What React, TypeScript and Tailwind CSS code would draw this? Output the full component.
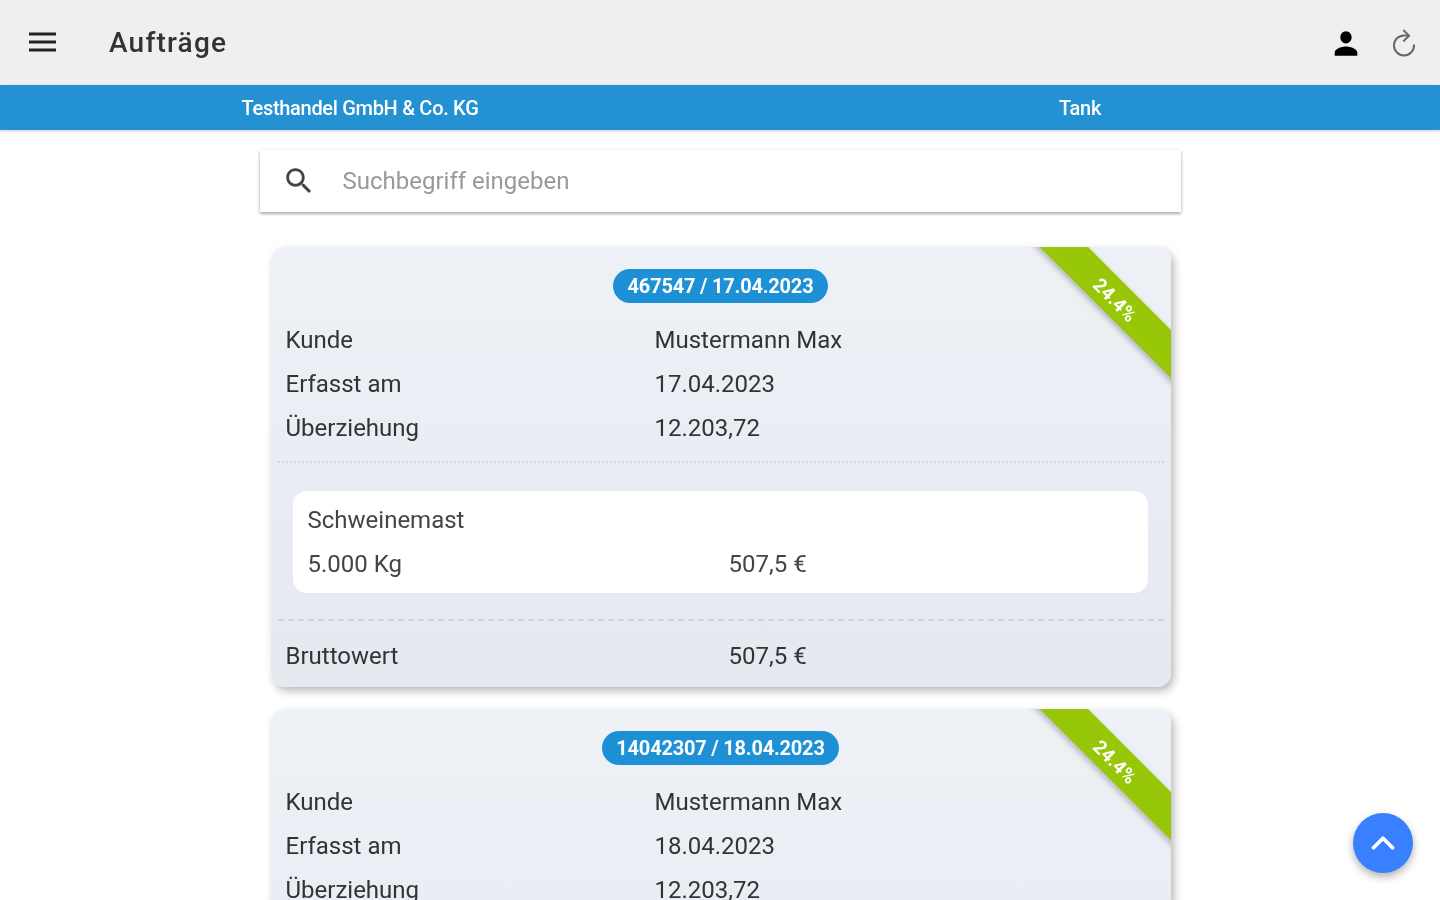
import { ChevronUp } from "lucide-react";

const orders = [
  { id: "467547 / 17.04.2023", date: "17.04.2023" },
  { id: "14042307 / 18.04.2023", date: "18.04.2023" },
];

function OrderCard({ id, date }: { id: string; date: string }) {
  return (
    <div className="relative overflow-hidden rounded-[14px] bg-gradient-to-b from-[#eef1f6] to-[#e5e8ef] shadow-[3px_4px_8px_rgba(0,0,0,0.28)] h-[440px] shrink-0">
      {/* corner ribbon */}
      <div className="absolute left-[726px] top-[36px] w-[240px] h-[34px] rotate-45 bg-[#97c706] shadow-[0_3px_6px_rgba(0,0,0,0.25)] flex items-center justify-center pr-[3px] pt-[5px] text-white text-[19px] font-bold">
        24.4%
      </div>

      <div className="flex justify-center pt-[22px] pr-[1px]">
        <span className="h-[34px] px-[14.5px] rounded-full bg-[#1e90d6] text-white text-[20px] font-bold leading-[34px] tracking-[-0.2px]">
          {id}
        </span>
      </div>

      <div className="mt-[15px] pl-[14.5px] pr-[15px] text-[#333] text-[24px] leading-[44px]">
        <div className="grid grid-cols-[369px_1fr]"><span>Kunde</span><span>Mustermann Max</span></div>
        <div className="grid grid-cols-[369px_1fr]"><span>Erfasst am</span><span>{date}</span></div>
        <div className="grid grid-cols-[369px_1fr]"><span>Überziehung</span><span>12.203,72</span></div>
      </div>

      <div className="mx-[7px] mt-[11px] border-t-2 border-dotted border-[#d4d7dc]" />

      <div className="ml-[22px] mr-[23px] mt-[28px] h-[102px] rounded-[14px] bg-white pl-[14.5px] pr-[15px] py-[7px] text-[#444] text-[24px] leading-[44px]">
        <div>Schweinemast</div>
        <div className="grid grid-cols-[421px_1fr]"><span>5.000 Kg</span><span>507,5 €</span></div>
      </div>

      <div className="mx-[7px] mt-[26px] border-t-2 border-dashed border-[#d0d3d8]" />

      <div className="mt-[13px] pl-[14.5px] pr-[15px] grid grid-cols-[443px_1fr] text-[#333] text-[24px] leading-[44px]">
        <span>Bruttowert</span><span>507,5 €</span>
      </div>
    </div>
  );
}

export default function App() {
  return (
    <div className="h-screen overflow-hidden bg-white font-['Roboto',sans-serif] blur-[0.7px]">
      {/* toolbar */}
      <div className="h-[85px] bg-[#efefef] flex items-center pl-[25px] pr-[20.5px]">
        <svg width="36" height="36" viewBox="0 0 36 36" className="shrink-0">
          <rect x="4" y="7.5" width="27" height="3" fill="#222" />
          <rect x="4" y="15.5" width="27" height="3" fill="#222" />
          <rect x="4" y="23.5" width="27" height="3" fill="#222" />
        </svg>
        <h1 className="ml-[48px] text-[28px] font-medium tracking-[1.2px] text-[#333]">Aufträge</h1>
        <div className="ml-auto flex items-center gap-[25px]">
          <svg width="34" height="37" viewBox="0 0 24 24" fill="#000" preserveAspectRatio="none" className="mt-[2px]">
            <path d="M12 12c2.21 0 4-1.79 4-4s-1.79-4-4-4-4 1.79-4 4 1.79 4 4 4zm0 2c-2.67 0-8 1.34-8 4v2h16v-2c0-2.66-5.33-4-8-4z" />
          </svg>
          <svg width="32" height="32" viewBox="0 0 512 512" fill="none" stroke="#666" strokeWidth="32" strokeLinecap="square">
            <path d="M320 146s24.36-12-64-12a160 160 0 10160 160" />
            <path d="M256 58l80 80-80 80" />
          </svg>
        </div>
      </div>

      {/* blue bar */}
      <div className="h-[45px] bg-[#2492d2] shadow-[0_1px_3px_rgba(0,0,0,0.2)] grid grid-cols-2 text-center text-white text-[20px] font-medium leading-[47px] tracking-[-0.3px]">
        <span>Testhandel GmbH &amp; Co. KG</span>
        <span>Tank</span>
      </div>

      {/* search */}
      <div className="mx-auto mt-[20px] w-[921px] h-[62px] bg-white flex items-center pl-[22px] shadow-[0_2px_3px_rgba(0,0,0,0.3),0_0_4px_rgba(0,0,0,0.08)]">
        <svg width="34" height="34" viewBox="0 0 24 24" fill="#444" className="shrink-0">
          <path d="M15.5 14h-.79l-.28-.27C15.41 12.59 16 11.11 16 9.5 16 5.91 13.09 3 9.5 3S3 5.91 3 9.5 5.91 16 9.5 16c1.61 0 3.09-.59 4.23-1.57l.27.28v.79l5 4.99L20.49 19l-4.99-5zm-6 0C7.01 14 5 11.99 5 9.5S7.01 5 9.5 5 14 7.01 14 9.5 11.99 14 9.5 14z" />
        </svg>
        <input
          placeholder="Suchbegriff eingeben"
          className="ml-[27px] flex-1 bg-transparent outline-none text-[24px] placeholder:text-[#999]"
        />
      </div>

      {/* orders */}
      <div className="ml-[271px] mt-[35px] w-[900px] flex flex-col gap-[22px]">
        {orders.map((o) => (
          <OrderCard key={o.id} id={o.id} date={o.date} />
        ))}
      </div>

      {/* scroll to top */}
      <button className="fixed right-[27px] bottom-[27px] w-[60px] h-[60px] rounded-full bg-[#3880ff] shadow-[0_4px_8px_rgba(0,0,0,0.3)] flex items-center justify-center text-white">
        <ChevronUp size={38} strokeWidth={2.4} />
      </button>
    </div>
  );
}
